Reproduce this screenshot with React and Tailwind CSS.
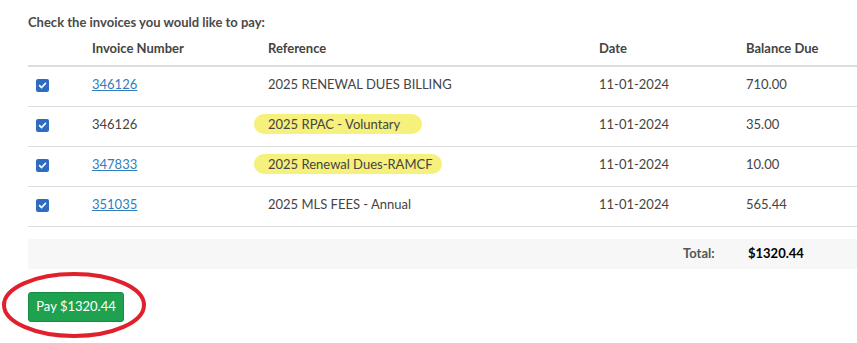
import React from "react";

const rows = [
  { num: "346126", link: true, ref: "2025 RENEWAL DUES BILLING", hl: null, date: "11-01-2024", bal: "710.00" },
  { num: "346126", link: false, ref: "2025 RPAC - Voluntary", hl: "w-[168px]", date: "11-01-2024", bal: "35.00" },
  { num: "347833", link: true, ref: "2025 Renewal Dues-RAMCF", hl: "w-[188px]", date: "11-01-2024", bal: "10.00" },
  { num: "351035", link: true, ref: "2025 MLS FEES - Annual", hl: null, date: "11-01-2024", bal: "565.44" },
];

function Check() {
  return (
    <span className="flex h-[13px] w-[13px] items-center justify-center rounded-[2px] bg-[#2f6cc0]">
      <svg width="9" height="9" viewBox="0 0 10 10" fill="none">
        <path d="M1.8 5.2 L4 7.3 L8.3 2.6" stroke="white" strokeWidth="1.8" strokeLinecap="round" strokeLinejoin="round" />
      </svg>
    </span>
  );
}

const cols = "grid grid-cols-[56px_176px_331px_147px_1fr]";

export default function App() {
  return (
    <div className="relative h-[343px] w-[857px] overflow-hidden bg-white pl-[28px] text-[13px] text-[#444] [font-family:Lato,'Liberation_Sans',sans-serif]">
      <div className="pt-[14px] text-[13px] font-bold leading-[16px] text-[#4a4a4a]">Check the invoices you would like to pay:</div>
      <div className={`${cols} h-[37px] items-center border-b-2 border-[#ddd] pt-[2px] font-bold text-[#444]`}>
        <div />
        <div className="pl-[8px]">Invoice Number</div>
        <div className="pl-[8px]">Reference</div>
        <div className="pl-[8px]">Date</div>
        <div className="pl-[8px]">Balance Due</div>
      </div>
      {rows.map((r, i) => (
        <div key={i} className={`${cols} h-[40px] items-center border-b border-[#ddd] pb-[3px]`}>
          <div className="pl-[8px]"><Check /></div>
          <div className="pl-[8px]">
            {r.link ? <span className="text-[#2f7dbd] underline">{r.num}</span> : <span>{r.num}</span>}
          </div>
          <div className="relative pl-[8px]">
            {r.hl && (
              <span className={`absolute left-[-6px] top-[-1px] h-[20px] ${r.hl} rounded-full bg-[#f6f07c]`} />
            )}
            <span className="relative">{r.ref}</span>
          </div>
          <div className="pl-[8px]">{r.date}</div>
          <div className="pl-[8px]">{r.bal}</div>
        </div>
      ))}
      <div className="mt-[12px] flex h-[30px] items-center bg-[#f7f7f7] font-bold">
        <div className="w-[655px]" />
        <div className="w-[65px] text-[#555]">Total:</div>
        <div className="text-black">$1320.44</div>
      </div>
      <div className="mt-[23px]">
        <button className="h-[30px] w-[96px] rounded-[3px] border border-[#1a8a44] bg-[#1fa24f] text-[13px] text-white">Pay $1320.44</button>
      </div>
      <svg className="absolute left-0 top-[270px]" width="150" height="73" viewBox="0 0 150 73">
        <ellipse cx="74" cy="35" rx="70" ry="31" fill="none" stroke="#e0202a" strokeWidth="4" />
      </svg>
    </div>
  );
}
